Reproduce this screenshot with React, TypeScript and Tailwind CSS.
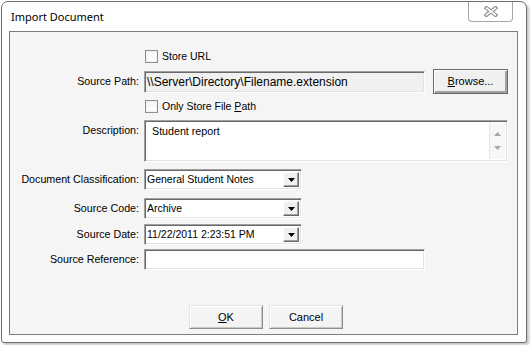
import React from "react";

const sunken =
  "border border-t-[#a0a0a0] border-l-[#a0a0a0] border-b-[#ffffff] border-r-[#ffffff] shadow-[inset_1px_1px_0_#696969,inset_-1px_-1px_0_#e3e3e3]";

function Checkbox({ label, underline }: { label: string; underline?: number }) {
  return (
    <div className="flex items-center h-[13px]">
      <div className="ml-[1px] w-[13px] h-[13px] border border-[#8e8f8f] bg-[linear-gradient(135deg,#f4f4f4,#ffffff)] shadow-[inset_0_0_0_1px_#f0f0f0]" />
      <span className="ml-[4px] text-[10.5px] leading-none text-black">
        {underline !== undefined ? (
          <>
            {label.slice(0, underline)}
            <span className="underline">{label[underline]}</span>
            {label.slice(underline + 1)}
          </>
        ) : (
          label
        )}
      </span>
    </div>
  );
}

function Label({ children, top }: { children: React.ReactNode; top?: boolean }) {
  return (
    <div
      className={
        "w-[134px] shrink-0 pr-[5px] text-right text-[10.7px] leading-none text-black " +
        (top ? "pt-[5px] self-start" : "")
      }
    >
      {children}
    </div>
  );
}

function Select({ value }: { value: string }) {
  return (
    <div className={"w-[158px] h-[21px] bg-white flex items-stretch " + sunken}>
      <div className="flex-1 flex items-center pl-[2px] text-[10.5px] leading-none text-black">{value}</div>
      <div className="w-[16px] my-[2px] mr-[2px] bg-[#f0f0f0] border border-t-[#ffffff] border-l-[#ffffff] border-b-[#696969] border-r-[#696969] shadow-[inset_-1px_-1px_0_#a0a0a0] flex items-center justify-center">
        <svg width="7" height="4" viewBox="0 0 7 4">
          <path d="M0 0H7L3.5 4Z" fill="#000" />
        </svg>
      </div>
    </div>
  );
}

export default function App() {
  return (
    <div
      className="w-[531px] h-[345px] bg-white"
      style={{ fontFamily: '"Liberation Sans", Arial, sans-serif' }}
    >
      <div className="ml-[1px] mt-[1px] w-[526px] h-[342px] border border-[#6f6f6f] rounded-t-[7px] rounded-b-[3px] bg-white flex flex-col shadow-[2px_2px_3px_rgba(0,0,0,0.25)]">
        {/* title bar */}
        <div className="h-[29px] flex items-start justify-between shrink-0">
          <span
            className="ml-[9px] mt-[9px] text-[11px] leading-none text-black"
            style={{ fontFamily: '"Noto Sans", "Open Sans", sans-serif' }}
          >
            Import Document
          </span>
          <div className="mr-[13px] w-[45px] h-[20px] border border-t-0 border-[#a7a7a7] rounded-b-[4px] bg-white flex items-center justify-center">
            <svg width="14" height="11" viewBox="0 0 14 11">
              <path d="M2.5 2L11.5 9M11.5 2L2.5 9" stroke="#8a8a8a" strokeWidth="3.8" strokeLinecap="square" />
              <path d="M2.5 2L11.5 9M11.5 2L2.5 9" stroke="#ffffff" strokeWidth="1.6" strokeLinecap="square" />
            </svg>
          </div>
        </div>

        {/* content panel */}
        <div className="ml-[7px] mr-[8px] mb-[7px] flex-1 border border-[#7b7b7b] bg-[#f5f5f5] flex flex-col">
          {/* Store URL */}
          <div className="mt-[18px] flex">
            <div className="w-[134px] shrink-0" />
            <Checkbox label="Store URL" />
          </div>

          {/* Source Path */}
          <div className="mt-[6px] flex items-center h-[25px]">
            <Label>Source Path:</Label>
            <div className={"w-[281px] h-[22px] bg-[#f0f0f0] flex items-center pl-[2px] text-[12px] leading-none text-black " + sunken}>
              \\Server\Directory\Filename.extension
            </div>
            <div className="ml-[8px] w-[75px] h-[25px] border border-[#696969] bg-[#f0f0f0] shadow-[inset_1px_1px_0_#ffffff,inset_-2px_-2px_0_#a0a0a0] flex items-center justify-center text-[11px] leading-none text-black">
              <span>
                <span className="underline">B</span>rowse...
              </span>
            </div>
          </div>

          {/* Only store file path */}
          <div className="mt-[6px] flex">
            <div className="w-[134px] shrink-0" />
            <Checkbox label="Only Store File Path" underline={16} />
          </div>

          {/* Description */}
          <div className="mt-[7px] flex">
            <Label top>Description:</Label>
            <div className={"w-[364px] h-[42px] bg-white flex " + sunken}>
              <div className="flex-1 pl-[7px] pt-[5px] text-[10.7px] leading-none text-black">Student report</div>
              <div className="w-[16px] my-[2px] mr-[2px] border-l border-[#e6e6e6] bg-[#f7f7f7] flex flex-col items-center justify-between py-[9px]">
                <svg width="7" height="4" viewBox="0 0 7 4">
                  <path d="M0 4H7L3.5 0Z" fill="#a6a6a6" />
                </svg>
                <svg width="7" height="4" viewBox="0 0 7 4">
                  <path d="M0 0H7L3.5 4Z" fill="#a6a6a6" />
                </svg>
              </div>
            </div>
          </div>

          {/* Document Classification */}
          <div className="mt-[7px] flex items-center">
            <Label>Document Classification:</Label>
            <Select value="General Student Notes" />
          </div>

          {/* Source Code */}
          <div className="mt-[8px] flex items-center">
            <Label>Source Code:</Label>
            <Select value="Archive" />
          </div>

          {/* Source Date */}
          <div className="mt-[5px] flex items-center">
            <Label>Source Date:</Label>
            <Select value="11/22/2011 2:23:51 PM" />
          </div>

          {/* Source Reference */}
          <div className="mt-[4px] flex items-center">
            <Label>Source Reference:</Label>
            <div className={"w-[281px] h-[21px] bg-white " + sunken} />
          </div>

          {/* Buttons */}
          <div className="mt-[35px] flex pl-[179px] gap-[6px]">
            <div className="w-[74px] h-[24px] bg-[#f4f4f4] border border-t-[#e3e3e3] border-l-[#e3e3e3] border-b-[#8e8e8e] border-r-[#8e8e8e] shadow-[inset_1px_1px_0_#ffffff,inset_-1px_-1px_0_#c8c8c8] flex items-center justify-center text-[11px] leading-none text-black">
              <span>
                <span className="underline">O</span>K
              </span>
            </div>
            <div className="w-[74px] h-[24px] bg-[#f4f4f4] border border-t-[#e3e3e3] border-l-[#e3e3e3] border-b-[#8e8e8e] border-r-[#8e8e8e] shadow-[inset_1px_1px_0_#ffffff,inset_-1px_-1px_0_#c8c8c8] flex items-center justify-center text-[11px] leading-none text-black">
              Cancel
            </div>
          </div>
        </div>
      </div>
    </div>
  );
}
